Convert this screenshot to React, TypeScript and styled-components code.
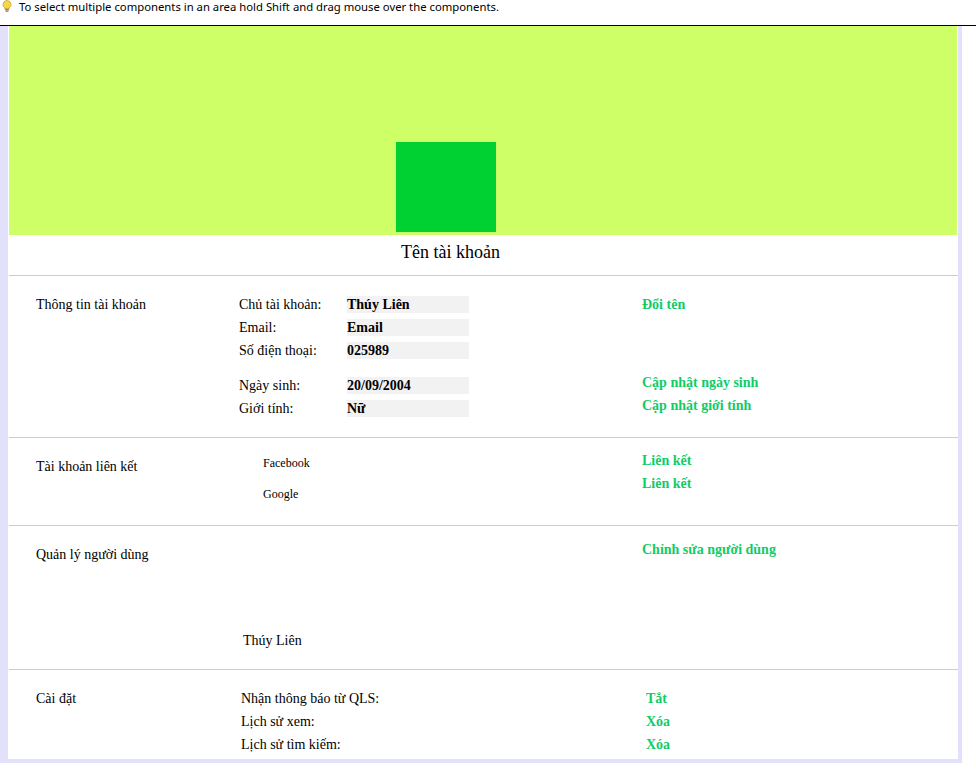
import styled, { createGlobalStyle } from "styled-components";

const GlobalStyle = createGlobalStyle`
  body {
    margin: 0;
    background: #ffffff;
  }
`;

const HintBar = styled.div`
  display: flex;
  align-items: flex-start;
  gap: 7px;
  height: 25px;
  padding-left: 2px;
  border-bottom: 1px solid #000000;
  font-family: "Noto Sans", "Open Sans", sans-serif;
  font-size: 11.3px;
  line-height: 14px;
  color: #000000;

  svg {
    flex-shrink: 0;
  }
`;

const Frame = styled.div`
  width: 950px;
  padding: 0 4px 4px 8px;
  background: #e1e1fc;
`;

const Content = styled.div`
  height: 733px;
  overflow: hidden;
  padding-left: 1px;
  background: #ffffff;
  font-family: "Liberation Serif", "Times New Roman", serif;
  font-size: 14px;
  color: #000000;
`;

const Banner = styled.div`
  display: flex;
  justify-content: center;
  align-items: flex-end;
  height: 209px;
  margin-right: 1px;
  padding-right: 74px;
  padding-bottom: 3px;
  box-sizing: border-box;
  background: #cfff66;
`;

const Avatar = styled.div`
  width: 100px;
  height: 90px;
  background: #00d132;
`;

const AccountName = styled.div`
  height: 40px;
  padding: 6px 66px 0 0;
  box-sizing: border-box;
  text-align: center;
  font-size: 18px;
  line-height: 22px;
`;

const Section = styled.div<{ $top: number; $bottom: number }>`
  display: grid;
  grid-template-columns: 203px 403px 1fr;
  align-items: start;
  padding: ${({ $top }) => $top}px 0 ${({ $bottom }) => $bottom}px 27px;
  border-top: 1px solid #cccccc;
  line-height: 17px;
`;

const SectionTitle = styled.div<{ $offset?: number }>`
  margin-top: ${({ $offset }) => $offset ?? 0}px;
`;

const Column = styled.div<{ $indent?: number; $offset?: number; $gap?: number }>`
  display: flex;
  flex-direction: column;
  gap: ${({ $gap }) => $gap ?? 6}px;
  padding-left: ${({ $indent }) => $indent ?? 0}px;
  margin-top: ${({ $offset }) => $offset ?? 0}px;
`;

const InfoRow = styled.div<{ $space?: number }>`
  display: flex;
  margin-top: ${({ $space }) => $space ?? 0}px;
`;

const InfoLabel = styled.span`
  width: 108px;
`;

const InfoValue = styled.span`
  width: 122px;
  height: 17px;
  background: #f2f2f2;
  font-weight: bold;
`;

const ActionLink = styled.a<{ $space?: number }>`
  margin-top: ${({ $space }) => $space ?? 0}px;
  color: #0fcc66;
  font-weight: bold;
  text-decoration: none;
  cursor: pointer;
`;

const SmallText = styled.div`
  font-size: 12px;
`;

const Bulb = () => (
  <svg width="10" height="12" viewBox="0 0 10 12">
    <path d="M5 0.5a4 4 0 0 0-2.4 7.2V8.5h4.8V7.7A4 4 0 0 0 5 0.5z" fill="#f7d64a" stroke="#c9a227" strokeWidth="0.8" />
    <rect x="3" y="9" width="4" height="1.2" fill="#8a8a8a" />
    <rect x="3.5" y="10.5" width="3" height="1.2" fill="#6d6d6d" />
  </svg>
);

const App = () => {
  const accountRows = [
    { label: "Chủ tài khoản:", value: "Thúy Liên", space: 0 },
    { label: "Email:", value: "Email", space: 0 },
    { label: "Số điện thoại:", value: "025989", space: 0 },
    { label: "Ngày sinh:", value: "20/09/2004", space: 12 },
    { label: "Giới tính:", value: "Nữ", space: 0 },
  ];

  const settings = [
    { label: "Nhận thông báo từ QLS:", action: "Tắt" },
    { label: "Lịch sử xem:", action: "Xóa" },
    { label: "Lịch sử tìm kiếm:", action: "Xóa" },
  ];

  return (
    <>
      <GlobalStyle />
      <HintBar>
        <Bulb />
        <span>To select multiple components in an area hold Shift and drag mouse over the components.</span>
      </HintBar>
      <Frame>
        <Content>
          <Banner>
            <Avatar />
          </Banner>
          <AccountName>Tên tài khoản</AccountName>

          <Section $top={20} $bottom={20}>
            <SectionTitle>Thông tin tài khoản</SectionTitle>
            <Column $gap={6}>
              {accountRows.map((row) => (
                <InfoRow key={row.label} $space={row.space}>
                  <InfoLabel>{row.label}</InfoLabel>
                  <InfoValue>{row.value}</InfoValue>
                </InfoRow>
              ))}
            </Column>
            <Column>
              <ActionLink>Đổi tên</ActionLink>
              <ActionLink $space={55}>Cập nhật ngày sinh</ActionLink>
              <ActionLink>Cập nhật giới tính</ActionLink>
            </Column>
          </Section>

          <Section $top={14} $bottom={22}>
            <SectionTitle $offset={6}>Tài khoản liên kết</SectionTitle>
            <Column $indent={24} $offset={3} $gap={14}>
              <SmallText>Facebook</SmallText>
              <SmallText>Google</SmallText>
            </Column>
            <Column>
              <ActionLink>Liên kết</ActionLink>
              <ActionLink>Liên kết</ActionLink>
            </Column>
          </Section>

          <Section $top={15} $bottom={20}>
            <SectionTitle $offset={5}>Quản lý người dùng</SectionTitle>
            <Column $indent={4} $offset={91}>
              <div>Thúy Liên</div>
            </Column>
            <Column>
              <ActionLink>Chỉnh sửa người dùng</ActionLink>
            </Column>
          </Section>

          <Section $top={20} $bottom={20}>
            <SectionTitle>Cài đặt</SectionTitle>
            <Column $indent={2}>
              {settings.map((s) => (
                <div key={s.label}>{s.label}</div>
              ))}
            </Column>
            <Column $indent={4}>
              {settings.map((s) => (
                <ActionLink key={s.label}>{s.action}</ActionLink>
              ))}
            </Column>
          </Section>
        </Content>
      </Frame>
    </>
  );
};

export default App;
